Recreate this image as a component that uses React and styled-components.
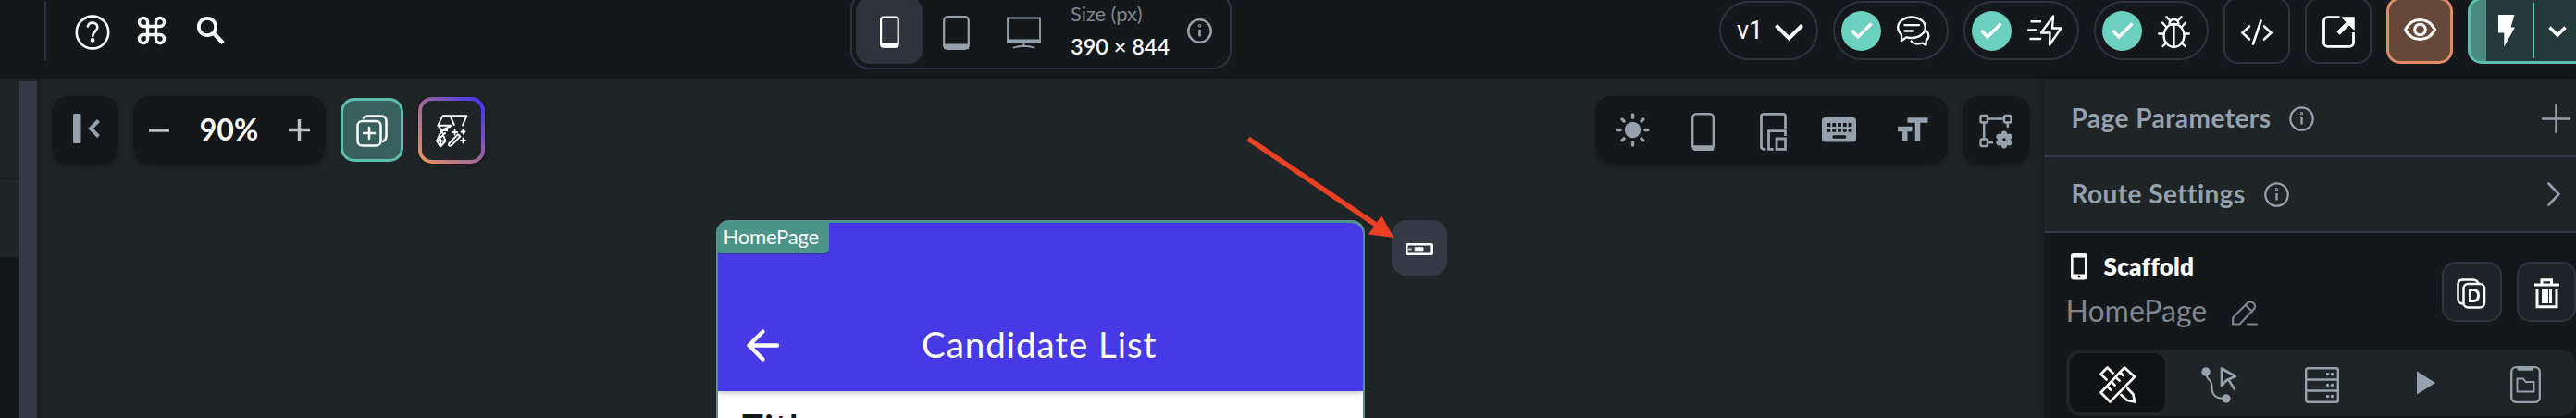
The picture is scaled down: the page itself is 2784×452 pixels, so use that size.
import React from "react";
import styled, { createGlobalStyle } from "styled-components";

const c = {
  ink: "#14181b",
  panel: "#1f2427",
  line: "#2d333d",
  slate: "#343a45",
  muted: "#95a1ac",
  dim: "#7d858e",
  teal: "#5cbfae",
  tag: "#4b9487",
  violet: "#4839e6",
};

const GlobalStyle = createGlobalStyle`
  * { box-sizing: border-box; }
  body { margin: 0; background: ${c.panel}; font-family: Lato, "Liberation Sans", sans-serif; }
`;

const Page = styled.div`
  width: 2784px;
  height: 452px;
  overflow: hidden;
  display: flex;
  flex-direction: column;
`;

const TopBar = styled.header`
  flex: none;
  height: 85px;
  background: ${c.ink};
`;
const TopRow = styled.div`
  height: 66px;
  display: flex;
  align-items: center;
`;
const TopLeft = styled.div`
  width: 919px;
  flex: none;
  display: flex;
  align-items: center;
  padding-left: 48px;
`;
const Separator = styled.span`
  width: 2px;
  height: 64px;
  margin-right: 31px;
  background: ${c.line};
`;
const Glyph = styled.svg`
  flex: none;
  display: block;
  overflow: visible;
  fill: none;
  stroke: ${(p) => p.$color || "#fff"};
  stroke-width: ${(p) => p.$weight || 3};
  stroke-linecap: ${(p) => p.$cap || "round"};
  stroke-linejoin: ${(p) => p.$join || "round"};
  margin-left: ${(p) => p.$ml || 0}px;
  margin-top: ${(p) => p.$mt || 0}px;
`;

const DeviceBox = styled.div`
  flex: none;
  width: 412px;
  height: 84px;
  padding: 4px;
  border: 2px solid ${c.line};
  border-radius: 20px;
  display: flex;
  align-items: center;
`;
const DeviceButton = styled.div`
  width: 72px;
  height: 72px;
  flex: none;
  border-radius: 15px;
  display: flex;
  align-items: center;
  justify-content: center;
  background: ${(p) => (p.$active ? "#2e343d" : "transparent")};
`;
const SizeBlock = styled.div`
  margin-left: 16px;
  width: 126px;
  flex: none;
  margin-top: -1px;
`;
const Text = styled.span`
  display: block;
  white-space: nowrap;
  font-family: ${(p) => p.$font || "inherit"};
  font-size: ${(p) => p.$size}px;
  line-height: ${(p) => p.$lh || p.$size * 1.2}px;
  font-weight: ${(p) => p.$bold || 400};
  letter-spacing: ${(p) => p.$track || 0}px;
  color: ${(p) => p.$color || "#fff"};
`;
const ScreenTitle = styled(Text)`
  margin: -3px 0 0 154px;
`;
const WidgetType = styled(Text)`
  margin-left: 18px;
`;

const Actions = styled.div`
  flex: none;
  margin-left: 527px;
  display: flex;
  align-items: center;
  gap: 16px;
`;
const Pill = styled.div`
  width: ${(p) => p.$w || 124.5}px;
  height: 64px;
  flex: none;
  border: 2px solid ${c.line};
  border-radius: 32px;
  display: flex;
  align-items: center;
  padding-left: ${(p) => p.$pad || 7}px;
`;
const Status = styled.span`
  width: 43px;
  height: 43px;
  flex: none;
  border-radius: 50%;
  background: #6cd0c0;
  display: flex;
  align-items: center;
  justify-content: center;
`;
const SquareButton = styled.div`
  width: 72px;
  height: 72px;
  flex: none;
  border: ${(p) => (p.$accent ? "3px solid #e08d67" : `2px solid ${c.line}`)};
  background: ${(p) => (p.$accent ? "#664838" : "transparent")};
  border-radius: 15px;
  display: flex;
  align-items: center;
  justify-content: center;
`;
const RunButton = styled.div`
  width: 132px;
  height: 72px;
  flex: none;
  border: 3px solid ${c.teal};
  border-radius: 15px;
  overflow: hidden;
  display: flex;
  align-items: center;
  background: linear-gradient(90deg, #4a8a80 17px, #23393b 17px);
`;
const RunDivider = styled.span`
  width: 2px;
  height: 60px;
  margin: 0 15px 0 19px;
  background: ${c.teal};
`;

const Body = styled.div`
  flex: 1;
  display: flex;
  min-height: 0;
`;
const LeftPanel = styled.aside`
  width: 20px;
  flex: none;
  display: flex;
  flex-direction: column;
`;
const LeftSlot = styled.div`
  height: ${(p) => p.$h}px;
  flex: none;
  border-bottom: ${(p) => (p.$rule ? `2px solid ${c.ink}` : "none")};
  background: ${(p) => (p.$dark ? c.ink : c.panel)};
`;
const Scrollbar = styled.div`
  width: 20px;
  flex: none;
  margin-top: 3px;
  background: ${c.slate};
`;
const Canvas = styled.main`
  flex: 1;
  min-width: 0;
  background: linear-gradient(90deg, #1a1e21, ${c.panel} 8px);
`;
const ToolRow = styled.div`
  height: 73px;
  margin: 19px 15px 0 16px;
  display: flex;
  align-items: center;
  gap: 16px;
`;
const ToolBox = styled.div`
  width: ${(p) => p.$w || 72}px;
  height: 73px;
  flex: none;
  display: flex;
  align-items: center;
  justify-content: ${(p) => p.$justify || "center"};
  padding: 0 ${(p) => p.$pad || 0}px;
  margin-left: ${(p) => (p.$push ? "auto" : 0)};
  background: ${c.ink};
  border-radius: 17px;
  box-shadow: 0 3px 6px rgba(0, 0, 0, 0.25);
`;
const AddButton = styled.div`
  width: 68px;
  height: 69px;
  flex: none;
  border: 3px solid ${c.teal};
  border-radius: 15px;
  background: #38605f;
  display: flex;
  align-items: center;
  justify-content: center;
`;
const MagicButton = styled.div`
  width: 72px;
  height: 72px;
  flex: none;
  border: 4px solid transparent;
  border-radius: 15px;
  background: linear-gradient(${c.panel}, ${c.panel}) padding-box,
    linear-gradient(45deg, #e08d67 8%, #9a659a 50%, #4b39ef 92%) border-box;
  box-shadow: 0 3px 6px rgba(0, 0, 0, 0.3);
  display: flex;
  align-items: center;
  justify-content: center;
`;

const Stage = styled.div`
  position: relative;
  display: flex;
  align-items: flex-start;
  margin: 61px 0 0 734px;
`;
const Device = styled.div`
  width: 701px;
  height: 260px;
  flex: none;
  border: 2px solid ${c.tag};
  border-top-width: 3px;
  border-radius: 14px 14px 0 0;
  background: #fff;
  overflow: hidden;
`;
const AppHeader = styled.div`
  height: 182px;
  background: ${c.violet};
  box-shadow: 0 2px 6px rgba(0, 0, 0, 0.25);
  display: flex;
  flex-direction: column;
`;
const Tag = styled.div`
  width: 122px;
  height: 36px;
  margin: -3px 0 0 -2px;
  flex: none;
  padding: 5px 0 0 7.5px;
  background: ${c.tag};
  border-radius: 0 0 5px 5px;
  box-shadow: 0 1px 1px rgba(20, 60, 60, 0.5);
`;
const HeaderRow = styled.div`
  flex: 1;
  display: flex;
  align-items: center;
  padding: 50px 0 0 31px;
`;
const BodyTitle = styled.div`
  padding: 14px 0 0 26px;
`;
const AppBarToggle = styled.div`
  width: 60px;
  height: 60px;
  margin-left: 28.5px;
  flex: none;
  border-radius: 16px;
  background: ${c.slate};
  display: flex;
  align-items: center;
  justify-content: center;
`;
const Pointer = styled.svg`
  position: absolute;
  left: 572px;
  top: -92px;
  overflow: visible;
`;

const Inspector = styled.aside`
  width: 575.5px;
  flex: none;
  background: ${c.ink};
  box-shadow: -3px 0 10px rgba(0, 0, 0, 0.22);
`;
const Setting = styled.div`
  height: ${(p) => p.$h}px;
  border-bottom: 2px solid ${c.slate};
  background: ${c.panel};
  display: flex;
  align-items: center;
  padding: ${(p) => p.$top || 0}px ${(p) => p.$right}px 0 30px;
`;
const Spacer = styled.span`
  flex: 1;
`;
const Identity = styled.div`
  height: 126px;
  display: flex;
  gap: 16px;
`;
const Names = styled.div`
  width: 414.5px;
  flex: none;
  padding: 20px 0 0 24px;
`;
const NameRow = styled.div`
  display: flex;
  align-items: center;
  height: ${(p) => p.$h}px;
  margin-top: ${(p) => p.$mt || 0}px;
`;
const WidgetButton = styled.div`
  width: 64.5px;
  height: 65px;
  flex: none;
  margin-top: 31px;
  border: 2px solid #2f3540;
  border-radius: 15px;
  background: #1e2327;
  display: flex;
  align-items: center;
  justify-content: center;
`;
const Tabs = styled.nav`
  height: 72px;
  margin-left: 24.5px;
  padding: 4px;
  border-radius: 16px;
  background: ${c.panel};
  display: flex;
  gap: 7.3px;
`;
const Tab = styled.div`
  width: 103px;
  height: 64px;
  flex: none;
  border-radius: 12px;
  background: ${(p) => (p.$active ? "#101213" : "transparent")};
  display: flex;
  align-items: center;
  justify-content: center;
`;

const Info = ({ ml, weight = 2.6 }) => (
  <Glyph width="27" height="27" $color={c.muted} $weight={weight} $ml={ml}>
    <circle cx="13.5" cy="13.5" r="12.2" />
    <path d="M13.5 12v7.5" strokeLinecap="butt" />
    <circle cx="13.5" cy="7.7" r=".5" />
  </Glyph>
);

const Passed = () => (
  <Status>
    <Glyph width="24" height="18" $weight="3.4" $cap="butt" $join="miter">
      <path d="M1.5 9l6.5 7L22.5 1.5" />
    </Glyph>
  </Status>
);

const TopBarView = () => (
  <TopBar>
    <TopRow>
      <TopLeft>
        <Separator />
        <Glyph width="38" height="38" $weight="2.6" $mt={3}>
          <ellipse cx="19" cy="19" rx="17.2" ry="17.4" />
          <path d="M13.8 12.6c.7-2.6 2.8-4 5.3-4 3 0 5.2 2.2 5.2 4.9 0 4.2-5.1 4.9-5.1 9.5" />
          <circle cx="19.1" cy="27.4" r="1.1" />
        </Glyph>
        <Glyph width="36" height="36" viewBox="0 0 24 24" $weight="2.3" $ml={27}>
          <path d="M15 6v12a3 3 0 1 0 3-3H6a3 3 0 1 0 3 3V6a3 3 0 1 0-3 3h12a3 3 0 1 0-3-3" />
        </Glyph>
        <Glyph width="30" height="30" $weight="3.8" $cap="butt" $ml={31}>
          <circle cx="11" cy="11" r="9.2" />
          <path d="M17.5 17.5L28 28.500" strokeWidth="4.5" />
        </Glyph>
      </TopLeft>

      <DeviceBox>
        <DeviceButton $active>
          <Glyph width="21" height="35" $weight="2.2" $mt={2}>
            <rect x="1.1" y="1.6" width="18.6" height="32" rx="3" />
            <path d="M2 30.500h17v3H2z" fill="#fff" />
          </Glyph>
        </DeviceButton>
        <DeviceButton>
          <Glyph width="29" height="37" $weight="2.2" $color={c.muted} $mt={4}>
            <rect x="1.2" y="1.2" width="26.6" height="34.600" rx="4" />
            <path d="M2 31.500h25v3.500H2z" fill={c.muted} />
          </Glyph>
        </DeviceButton>
        <DeviceButton>
          <Glyph width="37" height="35" $weight="1.8" $color={c.muted} $join="miter" $mt={4} $ml={3}>
            <path d="M1 1.500h35v26H1z" />
            <path d="M1 25.500h35v2H1z" fill={c.muted} />
            <path d="M18.500 28v4M7.500 33.500q11-3.500 22 0" />
          </Glyph>
        </DeviceButton>
        <SizeBlock>
          <Text $size={22} $lh={35} $color={c.dim} $track={-0.1}>Size (px)</Text>
          <Text $size={23.5} $lh={36} $bold={600} $track={0}>390 × 844</Text>
        </SizeBlock>
        <Info />
      </DeviceBox>

      <Actions>
        <Pill $w={107} $pad={17}>
          <Text $size={27} $lh={32} $font="Roboto, sans-serif">v1</Text>
          <Glyph width="31" height="18" $weight="4" $cap="butt" $join="miter" $ml={13} $mt={3}>
            <path d="M1.500 1.500l14 14L29.500 1.500" />
          </Glyph>
        </Pill>
        <Pill>
          <Passed />
          <Glyph width="36" height="34" $weight="2.3" $ml={17} $mt={2}>
            <path d="M5 20.500C2.500 18 1.200 15.500 1.200 12.800 1.200 6.500 8 1.500 16 1.500s14.800 5 14.800 11.300S24 24 16 24c-2 0-4-.2-5.500-.8L5 27z" />
            <path d="M8.500 10.200h15.500M8.500 16.500h9.500" />
            <path d="M15.500 27.500c3 3 8 3.800 12 2l4 2.200.2-4.500c3.600-3 3.500-8 .5-10.500" />
          </Glyph>
        </Pill>
        <Pill $w={125.5}>
          <Passed />
          <Glyph width="38" height="34" $weight="2.4" $ml={17}>
            <path d="M28 1.500L15 19.500h9.500L24 32.500 36.500 14.500H27z" />
            <path d="M4.500 7.200h9.500M1.200 16.500h8.500M3.500 26h10.500" />
          </Glyph>
        </Pill>
        <Pill $w={124}>
          <Passed />
          <Glyph width="35" height="35" $weight="2.3" $ml={17} $mt={3}>
            <ellipse cx="17.500" cy="21.500" rx="11" ry="12.500" />
            <path d="M17.500 10v24M12.500 8.500c.5-3.500 2.500-4.500 5-4.500s4.500 1 5 4.500q-5 2.200-10 0zM9.500 1.200l3.500 4M25.500 1.200l-3.500 4M1.200 19.500H6M29 19.500h4.800M5 7.500l4.500 5M30 7.500l-4.500 5M5.500 33l4-4M29.500 33l-4-4" />
          </Glyph>
        </Pill>
        <SquareButton>
          <Glyph width="34" height="28" $weight="2.6" $join="miter" $mt={3}>
            <path d="M9 7.500l-7.500 7 7.500 7M25 7.500l7.500 7-7.500 7M21.500 1.500L13 26.500" />
          </Glyph>
        </SquareButton>
        <SquareButton>
          <Glyph width="35" height="35" $weight="2.8" $mt={3} $cap="butt">
            <path d="M18.500 1.700H5.500a4 4 0 0 0-4 4v23.600a4 4 0 0 0 4 4h24a4 4 0 0 0 4-4V18" />
            <path d="M17 19L29 7" strokeWidth="4.8" />
            <path d="M21.500 2h12.500v12.500z" fill="#fff" strokeWidth="1.5" />
          </Glyph>
        </SquareButton>
        <SquareButton $accent>
          <Glyph width="35" height="24" $weight="3" $mt={-2}>
            <path d="M1.500 12C5 5 10.800 1.500 17.500 1.500S30 5 33.500 12C30 19 24.200 22.500 17.500 22.500S5 19 1.500 12z" />
            <circle cx="17.500" cy="12" r="5.800" />
          </Glyph>
        </SquareButton>
        <RunButton>
          <Glyph width="18" height="35" $ml={30} $weight="0">
            <path d="M0 0h17.500L13.500 13.500h4.500L6.300 34.500V19.500H0z" fill="#fff" />
          </Glyph>
          <RunDivider />
          <Glyph width="20" height="13" $weight="3.6" $cap="butt" $join="miter" $mt={2}>
            <path d="M1.500 1.500l8.500 8.500 8.500-8.500" />
          </Glyph>
        </RunButton>
      </Actions>
    </TopRow>
  </TopBar>
);

const CanvasView = () => (
  <Canvas>
    <ToolRow>
      <ToolBox>
        <Glyph width="29" height="33" $color={c.muted} $mt={-3} $ml={2} $weight="4" $cap="butt" $join="miter">
          <rect x="0" y="0" width="8.500" height="32" rx="1.500" fill={c.muted} stroke="none" />
          <path d="M27.500 7.500L19 16l8.500 8.500" />
        </Glyph>
      </ToolBox>
      <ToolBox $w={208} $justify="space-between" $pad={17}>
        <Glyph width="22" height="4" $color="#bfc0c0" $weight="3.4" $cap="butt">
          <path d="M0 2h22" />
        </Glyph>
        <Text $size={32} $bold={700} $track={0}>90%</Text>
        <Glyph width="23" height="23" $color="#bfc0c0" $weight="3.4" $cap="butt">
          <path d="M0 11.500h23M11.500 0v23" />
        </Glyph>
      </ToolBox>
      <AddButton>
        <Glyph width="34" height="35" $weight="2.5" $mt={2}>
          <rect x="1.500" y="7" width="25" height="26.500" rx="5" />
          <path d="M8 3.500q1.500-2 4-2h15q5.500 0 5.500 5.500v16q0 4-3.500 6M14 14v12M8 20h12" />
        </Glyph>
      </AddButton>
      <MagicButton>
        <Glyph width="34" height="35" $weight="1.9" $mt={1}>
          <path d="M16 11.700H2.300L7.500 1.200h26L29 11.500M15.700 1.500L19.800 11M2.300 11.700l4 5 9.700-4M6.300 17h6M6.300 17L1 28.500h9.500L6.300 17M10 20L1 28.500l4 6 5.500-6M5 24v10" />
          <path d="M14.500 31L24 21.200l2.300 2.300-9.500 9.800q-1.500 1-2.500 0t.2-2.300z" />
          <path d="M20.500 16.500v5M18 19h5M29.500 16.500v4M27.500 18.500h4M29.500 25.500v5M27 28h5" />
        </Glyph>
      </MagicButton>

      <ToolBox $w={381} $push $justify="space-between" $pad={21}>
        <Glyph width="37" height="37" $color={c.muted} $weight="3.4" $ml={1}>
          <circle cx="18.500" cy="18.500" r="8.700" fill={c.muted} stroke="none" />
          <path d="M18.500 2v3.200M18.500 31.800V35M2 18.500h3.200M31.800 18.500H35M7.100 7.100l2 2M27.900 27.900l2 2M7.100 29.900l2-2M27.900 9.100l2-2" />
        </Glyph>
        <Glyph width="25" height="41" $color={c.muted} $weight="2.4" $mt={3} $ml={5}>
          <rect x="1.200" y="1.200" width="22.600" height="38.600" rx="4" />
          <path d="M2 36.500h21v3H3z" fill={c.muted} />
        </Glyph>
        <Glyph width="29" height="41" $color={c.muted} $weight="2.8" $cap="butt" $join="miter" $mt={3} $ml={9}>
          <path d="M6.500 39.300H4.200q-2.700 0-2.700-2.700V4q0-2.700 2.700-2.700h20.600q2.700 0 2.700 2.700v13.500M27.500 25v-5.300H9.500v19.600h5" />
          <path d="M18 28h9.500v11.300H18z" />
        </Glyph>
        <Glyph width="37" height="27" $ml={-1} $weight="0">
          <rect width="37" height="26.500" rx="3.500" fill={c.muted} />
          <path d="M5.500 8h27M5.500 13.800h27" stroke={c.ink} strokeWidth="3.8" strokeDasharray="3.8 2" strokeLinecap="butt" />
          <path d="M13 21h11.500" stroke={c.ink} strokeWidth="3.5" />
        </Glyph>
        <Glyph width="33" height="27" $color={c.muted} $weight="5.5" $cap="butt" $join="miter" $ml={5} $mt={-1}>
          <path d="M10.500 3h22M21.500 3v22.500M0 12.500h15.500M7.800 12.500v13" />
        </Glyph>
      </ToolBox>
      <ToolBox $w={72.5}>
        <Glyph width="37" height="38" $color={c.muted} $weight="2.5" $mt={2}>
          <rect x="1.500" y="2" width="7.500" height="7.500" rx="1.500" />
          <rect x="27" y="2" width="7.500" height="7.500" rx="1.500" />
          <rect x="1.500" y="27.500" width="7.500" height="7.500" rx="1.500" />
          <path d="M9 5.500h18M5.200 9.500v18M30.800 9.500V14M9 31.300h5" />
          <circle cx="27" cy="28" r="4.500" strokeWidth="5.500" />
          <path d="M27 21.500v13M21.300 24.700l11.400 6.600M21.300 31.300l11.400-6.600" strokeWidth="6" />
          <circle cx="27" cy="28" r="1.800" fill={c.ink} stroke="none" />
        </Glyph>
      </ToolBox>
    </ToolRow>

    <Stage>
      <Device>
        <AppHeader>
          <Tag>
            <Text $size={22} $lh={26} $track={-0.2}>HomePage</Text>
          </Tag>
          <HeaderRow>
            <Glyph width="35" height="35" $weight="4.4">
              <path d="M33 17.500H2.500M17.500 2.500l-15 15 15 15" />
            </Glyph>
            <ScreenTitle as="h1" $size={38.5} $lh={44} $track={0.95}>Candidate List</ScreenTitle>
          </HeaderRow>
        </AppHeader>
        <BodyTitle>
          <Text $size={38} $lh={48} $bold={700} $track={1.5} $color={c.ink}>Title</Text>
        </BodyTitle>
      </Device>
      <AppBarToggle>
        <Glyph width="30" height="13" $weight="2.6" $mt={3}>
          <rect x="1.300" y="1.300" width="27.400" height="10.400" rx="1" />
          <path d="M3.500 6.500h2.500" strokeWidth="2" opacity=".7" />
          <path d="M10.500 4.800h8.500v3h-8.500z" fill="#fff" strokeWidth="1" />
        </Glyph>
      </AppBarToggle>
      <Pointer width="164" height="112">
        <path d="M3 4L144 99" stroke="#ec4024" strokeWidth="5.6" />
        <path d="M160.500 111L147 87 133 107.500z" fill="#ec4024" />
      </Pointer>
    </Stage>
  </Canvas>
);

const InspectorView = () => (
  <Inspector>
    <Setting $h={85} $right={6} $top={3}>
      <Text $size={28} $bold={700} $track={0.45} $color={c.muted}>Page Parameters</Text>
      <Info ml={20} weight={2.3} />
      <Spacer />
      <Glyph width="31" height="31" $color={c.muted} $weight="2.4" $mt={1}>
        <path d="M1 15.500h29M15.500 1v29" />
      </Glyph>
    </Setting>
    <Setting $h={82} $right={17}>
      <Text $size={28} $bold={700} $track={0.45} $color={c.muted}>Route Settings</Text>
      <Info ml={20} weight={2.3} />
      <Spacer />
      <Glyph width="14" height="26" $color={c.muted} $weight="2.6">
        <path d="M1.500 1.500L12.500 13l-11 11.500" />
      </Glyph>
    </Setting>
    <Identity>
      <Names>
        <NameRow $h={32}>
          <Glyph width="18" height="29" $ml={5} $weight="2.5">
            <rect x="1.300" y="1.300" width="15" height="26" rx="2" />
            <path d="M2 2.500h14M2 24.500h14" strokeWidth="4" />
            <circle cx="9" cy="25" r="1.500" fill={c.ink} stroke="none" />
          </Glyph>
          <WidgetType $size={26} $lh={29} $bold={800} $track={0.25}>Scaffold</WidgetType>
        </NameRow>
        <NameRow $h={40} $mt={12}>
          <Text $size={32} $color={c.dim}>HomePage</Text>
          <Glyph width="28" height="27" $color={c.dim} $weight="2.2" $ml={27} $mt={5}>
            <path d="M1.200 25.500v-7L17 2.500q3-2.500 6 0t1.500 6L8.500 25.500zM15 5l7 7M17 25.500h10" />
          </Glyph>
        </NameRow>
      </Names>
      <WidgetButton>
        <Glyph width="32" height="33" $weight="2.5" $join="miter" $mt={3}>
          <path d="M6 27.500q-4.500-1-4.500-6V6.500q0-5 5-5h11q4 0 5.500 3" />
          <rect x="7.500" y="6" width="22.500" height="25.500" rx="5" />
          <path d="M14.500 12.500h3.500q5.500 0 5.500 6t-5.500 6h-3.500z" strokeWidth="3" />
        </Glyph>
      </WidgetButton>
      <WidgetButton>
        <Glyph width="27" height="33" $weight="3" $cap="butt" $join="miter" $ml={2} $mt={3}>
          <path d="M0 7h27M8 6V1.800h10.500V6M3 12v18.800h21V12M9.500 12v15M13.500 12v15M17.500 12v15" />
        </Glyph>
      </WidgetButton>
    </Identity>
    <Tabs>
      <Tab $active>
        <Glyph width="39" height="40" $weight="2.7" $mt={3}>
          <path d="M27 1.500L1.500 28.500l10 10L38 11.500zM22 6.500l3.500 3.500M17.500 12l4 3.500M13 17l3.500 3.500M8.500 22l3.500 3.500" />
          <path d="M7.500 14.500L1.500 8.500l7-7 6 6M30.500 24l6 6.500 1.500 8-8-1.500-6.500-6" />
        </Glyph>
      </Tab>
      <Tab>
        <Glyph width="39" height="40" $color={c.muted} $weight="2" $mt={3}>
          <circle cx="5" cy="6" r="4.700" fill={c.muted} stroke="none" />
          <circle cx="27" cy="35" r="4.700" fill={c.muted} stroke="none" />
          <path d="M5 8c1 7 6.500 7 6.500 13s0 13.500 13 14" />
          <path d="M22 2.500v18.500l5.500-6 9.500-4zM30 15.500l6 9.500" strokeWidth="2.6" />
        </Glyph>
      </Tab>
      <Tab>
        <Glyph width="37" height="39" $color={c.muted} $weight="2.4" $mt={4}>
          <rect x="1.200" y="1.200" width="34.600" height="36.600" rx="2" />
          <path d="M1.200 13.500h34.600M1.200 25.500h34.600" />
          <path d="M24.500 7.500h.1M29.500 7.500h.1M24.500 19.500h.1M29.500 19.500h.1M24.500 31.500h.1M29.500 31.500h.1" strokeWidth="3.6" />
        </Glyph>
      </Tab>
      <Tab>
        <Glyph width="20" height="26" $weight="0" $ml={5}>
          <path d="M0 .5L20 13 0 25.500z" fill={c.muted} />
        </Glyph>
      </Tab>
      <Tab>
        <Glyph width="33" height="40" $color={c.muted} $weight="2.3" $mt={3}>
          <rect x="1.200" y="1.200" width="30.600" height="37.600" rx="5" />
          <path d="M9 3h14" strokeWidth="3.5" />
          <path d="M7.500 13.500h6.500l2.500 3.500h9v10.500h-18z" strokeWidth="1.9" />
        </Glyph>
      </Tab>
    </Tabs>
  </Inspector>
);

export default function App() {
  return (
    <>
      <GlobalStyle />
      <Page>
        <TopBarView />
        <Body>
          <LeftPanel>
            <LeftSlot $h={109} $rule />
            <LeftSlot $h={84} />
            <LeftSlot $h={174} $dark />
          </LeftPanel>
          <Scrollbar />
          <CanvasView />
          <InspectorView />
        </Body>
      </Page>
    </>
  );
}
